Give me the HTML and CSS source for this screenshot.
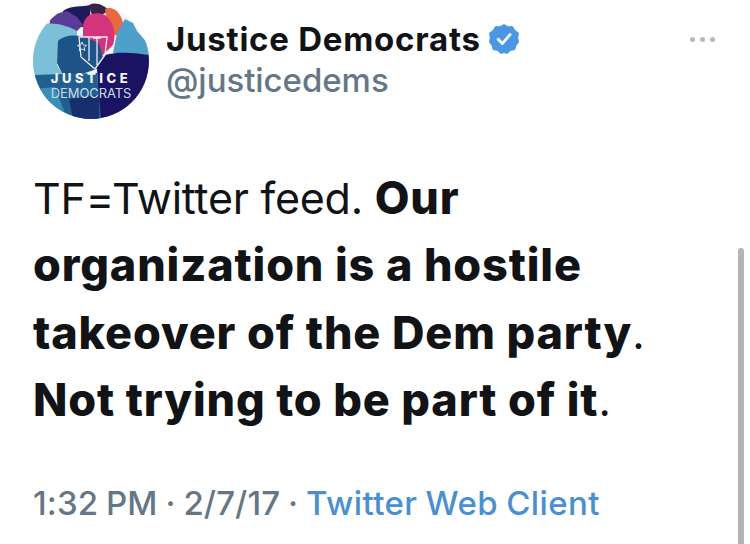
FILE: index.html
```html
<!DOCTYPE html>
<html lang="en">
<head>
<meta charset="utf-8">
<title>Justice Democrats tweet</title>
<link rel="stylesheet" href="styles.css">
</head>
<body>
<main class="tweet">
  <header class="head">
    <svg class="avatar" viewBox="0 0 116 116" aria-hidden="true">
      <defs><clipPath id="c"><circle cx="58" cy="58" r="58"/></clipPath></defs>
      <g clip-path="url(#c)">
        <rect width="116" height="116" fill="#f4f7f8"/>
        <path d="M30 8 C38 2 50 4 58 2 L56 24 L30 24Z" fill="#1e1a5c"/>
        <path d="M18 12 L34 8 L44 14 L50 22 L42 30 L16 24Z" fill="#5b3b98"/>
        <path d="M56 2 C62 -2 72 2 76 8 L60 16Z" fill="#3a2148"/>
        <path d="M72 6 C80 2 88 10 90 20 L88 34 L76 30Z" fill="#e8683f"/>
        <path d="M50 22 C52 10 64 8 72 12 C80 18 84 30 80 42 L70 52 L50 40Z" fill="#d4347e"/>
        <path d="M84 30 L92 16 L100 20 L104 28 L116 42 V52 L80 50Z" fill="#4f9fcb"/>
        <path d="M0 30 L8 22 C18 18 34 22 44 28 L44 36 L26 38 L24 62 L30 72 L0 74Z" fill="#7cc0d8"/>
        <path d="M25 38 C34 30 48 32 56 36 L66 40 L70 54 L64 66 L46 72 L30 72 L24 60Z" fill="#1d5386"/>
        <path d="M66 116 L64 64 L72 52 C86 48 104 50 116 52 V116Z" fill="#1a1362"/>
        <path d="M0 72 L64 70 L68 116 H0Z" fill="#215f90"/>
        <path d="M0 86 L22 84 L34 116 H0Z" fill="#3c8fb4"/>
        <path d="M36 96 L66 92 L66 116 H40Z" fill="#16306e"/>
        <path d="M46 34 H74 L72 52 L62 66 L48 54Z" fill="none" stroke="#e9eef5" stroke-width="1.3"/>
        <path d="M56 35 V58 M64 35 V62 M60 35 H68" fill="none" stroke="#e9eef5" stroke-width="1.3"/>
        <path d="M49 39 l1.4 3 3.2.3-2.4 2.1.7 3.2-2.9-1.7-2.9 1.7.7-3.2-2.4-2.1 3.2-.3z" fill="none" stroke="#e9eef5" stroke-width="0.9"/>
      </g>
    </svg>
    <span class="avatar-text">
      <span class="org-a">JUSTICE</span>
      <span class="org-b">DEMOCRATS</span>
    </span>
    <div class="names">
      <div class="name-row">
        <span class="name">Justice Democrats</span>
        <svg class="badge" viewBox="0 0 30 30" aria-hidden="true">
          <path d="M15 0.5 L19 2.8 L23.5 2.6 L25.8 6.5 L29.5 9 L28.7 13.5 L29.5 18 L27 21.6 L25.8 25.5 L21.5 26.5 L18.5 29.3 L15 28.7 L11.5 29.3 L8.5 26.5 L4.2 25.5 L3 21.6 L0.5 18 L1.3 13.5 L0.5 9 L4.2 6.5 L6.5 2.6 L11 2.8Z" fill="#4a98e3" stroke="#4a98e3" stroke-width="1" stroke-linejoin="round"/>
          <path d="M9.3 15.3 L13.3 19.6 L21 10.6" fill="none" stroke="#fff" stroke-width="2.8" stroke-linecap="round" stroke-linejoin="round"/>
        </svg>
      </div>
      <div class="handle">@justicedems</div>
    </div>
    <div class="more" aria-hidden="true"><i></i><i></i><i></i></div>
  </header>
  <p class="body">TF=Twitter feed. <b>Our organization is a hostile takeover of the Dem party</b>.<br><b>Not trying to be part of it</b>.</p>
  <p class="meta">1:32 PM · 2/7/17 · <span class="client">Twitter Web Client</span></p>
</main>
<div class="scrollbar"></div>
</body>
</html>
```
FILE: styles.css
```css
html, body {
  margin: 0;
  height: 544px;
  overflow: hidden;
  background: #fff;
}
body {
  font-family: Inter, "Liberation Sans", sans-serif;
  color: #111316;
}
.tweet {
  width: 640px;
  padding: 3px 0 0 33px;
  position: relative;
}
.head {
  display: flex;
  align-items: flex-start;
  width: 682px;
}
.avatar {
  width: 116px;
  height: 116px;
  flex: none;
}
.avatar-text {
  position: absolute;
  left: 33px;
  top: 71px;
  width: 116px;
  display: flex;
  flex-direction: column;
  align-items: center;
  gap: 2px;
  color: #f2f5f8;
  line-height: 13px;
}
.org-a {
  font-size: 13px;
  font-weight: 800;
  letter-spacing: 3.5px;
  margin-top: 1px;
}
.org-b {
  font-size: 13px;
  font-weight: 400;
  letter-spacing: -0.1px;
  color: #c9dbe6;
}
.names {
  margin-left: 17px;
  padding-top: 16px;
  flex: 1;
}
.name-row {
  display: flex;
  align-items: center;
  gap: 8px;
  height: 39px;
}
.name {
  font-size: 33px;
  font-weight: 700;
  letter-spacing: 0.75px;
}
.badge {
  width: 30px;
  height: 30px;
  flex: none;
}
.handle {
  font-size: 33px;
  font-weight: 500;
  line-height: 44px;
  letter-spacing: -0.05px;
  color: #657786;
}
.more {
  display: flex;
  gap: 5px;
  padding-top: 34px;
}
.more i {
  width: 5px;
  height: 5px;
  border-radius: 50%;
  background: #b4b8c0;
}
.body {
  margin: 46px 0 0;
  font-size: 43px;
  line-height: 67.4px;
  font-weight: 400;
  letter-spacing: -0.25px;
}
.body b {
  font-size: 45px;
  line-height: 1;
  font-weight: 800;
  letter-spacing: 0.85px;
}
.meta {
  margin: 46px 0 0;
  font-size: 33px;
  font-weight: 500;
  line-height: 44px;
  letter-spacing: 0.1px;
  word-spacing: -1px;
  color: #657786;
}
.client {
  color: #4a90d0;
  letter-spacing: 0.4px;
}
.scrollbar {
  position: absolute;
  left: 738px;
  top: 248px;
  width: 6px;
  height: 296px;
  border-radius: 3px 3px 0 0;
  background: #b3b3b3;
}
```
